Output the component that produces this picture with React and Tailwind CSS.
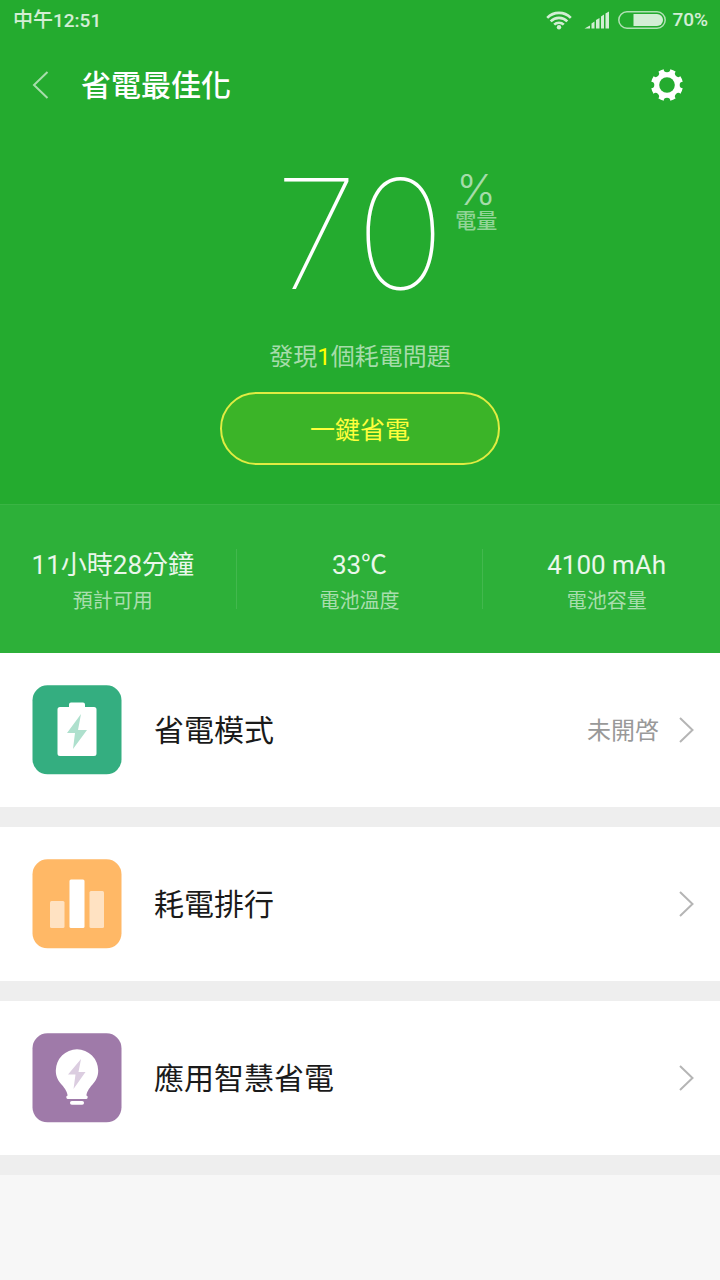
const stats = [
  { value: '11小時28分鐘', label: '預計可用' },
  { value: '33℃', label: '電池溫度' },
  { value: '4100 mAh', label: '電池容量' },
]

const BatteryIcon = () => (
  <svg viewBox="0 0 90 90" className="h-[90px] w-[90px] shrink-0" aria-hidden="true">
    <rect x="0.5" y="0.3" width="89" height="89" rx="15" fill="#34ae80" />
    <path
      d="M39 17.5H51a2 2 0 0 1 2 2V22H62a2.5 2.5 0 0 1 2.5 2.5V68.5a2.5 2.5 0 0 1-2.5 2.5H28a2.5 2.5 0 0 1-2.5-2.5V24.5A2.5 2.5 0 0 1 28 22H37V19.5a2 2 0 0 1 2-2Z"
      fill="#fff"
    />
    <path d="M49 29L35 48H43L41 64L55 45H46Z" fill="#aee0cd" />
  </svg>
)

const RankingIcon = () => (
  <svg viewBox="0 0 90 90" className="h-[90px] w-[90px] shrink-0" aria-hidden="true">
    <rect x="0.5" y="0.3" width="89" height="89" rx="15" fill="#ffb866" />
    <rect x="18" y="42" width="14.5" height="27" rx="1.5" fill="#ffe2c2" />
    <rect x="37.5" y="20.5" width="15" height="48.5" rx="1.5" fill="#fff" />
    <rect x="57.5" y="32" width="14.5" height="37" rx="1.5" fill="#ffe2c2" />
  </svg>
)

const BulbIcon = () => (
  <svg viewBox="0 0 90 90" className="h-[90px] w-[90px] shrink-0" aria-hidden="true">
    <rect x="0.5" y="0.3" width="89" height="89" rx="15" fill="#9f7aa9" />
    <path
      d="M45 16.3A21.2 21.2 0 0 0 23.8 37.5C23.8 43.5 26 47.5 29.5 51.5C33.5 56 35.2 59 35.6 62.5A1.8 1.8 0 0 0 36.6 66H53.4A1.8 1.8 0 0 0 54.4 62.5C54.8 59 56.5 56 60.5 51.5C64 47.5 66.2 43.5 66.2 37.5A21.2 21.2 0 0 0 45 16.3Z"
      fill="#fff"
    />
    <rect x="38" y="68" width="14" height="3.7" rx="1.8" fill="#fff" />
    <path d="M49 26L36 41.5H43.5L41.5 56L53.5 39H46.5Z" fill="#dbcde0" />
  </svg>
)

const items = [
  { title: '省電模式', status: '未開啓', icon: BatteryIcon },
  { title: '耗電排行', icon: RankingIcon },
  { title: '應用智慧省電', icon: BulbIcon },
]

const notchAngles = [0, 45, 90, 135, 180, 225, 270, 315]

const GearIcon = () => (
  <svg viewBox="-16 -16 32 32" className="h-8 w-8" aria-hidden="true">
    <mask id="gear-notches">
      <rect x="-16" y="-16" width="32" height="32" fill="#fff" />
      <circle r="7.8" fill="#000" />
      {notchAngles.map((angle) => (
        <circle key={angle} cy="-16" r="3.3" fill="#000" transform={`rotate(${angle})`} />
      ))}
    </mask>
    <circle r="16" fill="#fff" mask="url(#gear-notches)" />
  </svg>
)

const StatusBar = () => (
  <div className="flex h-10 items-center justify-between pr-3 pl-[13px] text-[19px] leading-10 font-medium text-white/80">
    <span>
      <span className="text-[20px]">中午</span>12:51
    </span>
    <div className="flex items-center">
      <svg viewBox="0 0 26 20" className="mr-3 h-5 w-[26px]" aria-hidden="true">
        <g fill="none" stroke="currentColor" strokeWidth="2.6">
          <path d="M1.2 7.8A16.5 16.5 0 0 1 24.8 7.8" />
          <path d="M4.7 11.3A11.7 11.7 0 0 1 21.3 11.3" />
          <path d="M8.2 14.7A6.8 6.8 0 0 1 17.8 14.7" />
        </g>
        <circle cx="13" cy="17.3" r="2.2" fill="currentColor" />
      </svg>
      <svg viewBox="0 0 26 18" className="mr-2 h-[18px] w-[26px]" fill="currentColor" aria-hidden="true">
        <path d="M0.5 17.5L6 14.5V17.5Z" />
        <path d="M7.5 17.5V12.5L10.5 10.5V17.5Z" />
        <path d="M12 17.5V9L15.5 7V17.5Z" />
        <path d="M17 17.5V5.5L20 3.5V17.5Z" />
        <path d="M21.5 17.5V2.5L25 0.5V17.5Z" />
      </svg>
      <svg viewBox="0 0 48 18" className="mr-[6px] h-[18px] w-12" aria-hidden="true">
        <rect x="0.8" y="0.8" width="46.4" height="16.4" rx="8.2" fill="none" stroke="currentColor" strokeWidth="1.5" opacity="0.8" />
        <path d="M15.5 3H39a6 6 0 0 1 0 12H15.5Z" fill="currentColor" />
      </svg>
      <span>70%</span>
    </div>
  </div>
)

const Header = () => (
  <header className="flex h-[90px] items-center pr-[37px] pl-[31px]">
    <button type="button" aria-label="返回" className="mr-8 text-white/60">
      <svg viewBox="0 0 18 28" className="h-7 w-[18px]" fill="none" stroke="currentColor" strokeWidth="2" aria-hidden="true">
        <path d="M16.5 1L3 14L16.5 27" />
      </svg>
    </button>
    <h1 className="flex-1 pt-0.5 text-[30px] leading-10 font-medium text-white">省電最佳化</h1>
    <button type="button" aria-label="設定">
      <GearIcon />
    </button>
  </header>
)

const Hero = () => (
  <section className="flex flex-col items-center pt-6 pb-[39px]">
    <div className="grid w-full grid-cols-[1fr_auto_1fr]">
      <p className="col-start-2 font-['Inter'] text-[152px] leading-[160px] font-thin text-white">70</p>
      <div className="flex flex-col items-center justify-self-start pt-4 pl-[10px] text-white/60">
        <p className="font-['Inter'] text-[42px] leading-10 font-light">%</p>
        <p className="text-[21px] leading-[22px] font-medium text-white/50">電量</p>
      </div>
    </div>
    <p className="mt-[27px] text-[24px] leading-8 text-white/60">
      發現<span className="text-[#ffff00]">1</span>個耗電問題
    </p>
    <button
      type="button"
      className="mt-[19px] h-[73px] w-[280px] rounded-full border-2 border-[#e0ec42] bg-[#3bb428] pt-1 text-[25px] leading-8 text-[#ffff3c]"
    >
      一鍵省電
    </button>
  </section>
)

const Stats = () => (
  <section className="overflow-hidden border-t border-[#3ab444] bg-[#2db039] py-11">
    <div className="-mx-[10px] grid grid-cols-3 divide-x divide-[#42b84d]">
      {stats.map((stat) => (
        <div key={stat.label} className="h-[60px] text-center">
          <p className="text-[26px] leading-8 text-white/90">{stat.value}</p>
          <p className="mt-1.5 text-[20px] leading-7 text-white/60">{stat.label}</p>
        </div>
      ))}
    </div>
  </section>
)

const App = () => {
  return (
    <div className="min-h-screen bg-[#f7f7f7] font-['Roboto','Noto_Sans_CJK_TC',sans-serif]">
      <div className="bg-[#24ab2f]">
        <StatusBar />
        <Header />
        <Hero />
        <Stats />
      </div>
      <main>
        {items.map((item) => {
          const Icon = item.icon
          return (
            <button
              key={item.title}
              type="button"
              className="flex h-[174px] w-full items-center border-b-20 border-[#eeeeee] bg-white pr-[25px] pl-8 text-left"
            >
              <Icon />
              <span className="ml-8 flex-1 pt-0.5 text-[30px] leading-10 text-[#1a1a1a]">{item.title}</span>
              {item.status && <span className="pt-0.5 text-[24px] leading-8 text-[#999999]">{item.status}</span>}
              <svg viewBox="0 0 18 26" className="ml-[18px] h-[26px] w-[18px]" fill="none" stroke="#b5b5b5" strokeWidth="2" aria-hidden="true">
                <path d="M3 1L15.5 13L3 25" />
              </svg>
            </button>
          )
        })}
      </main>
    </div>
  )
}

export default App
